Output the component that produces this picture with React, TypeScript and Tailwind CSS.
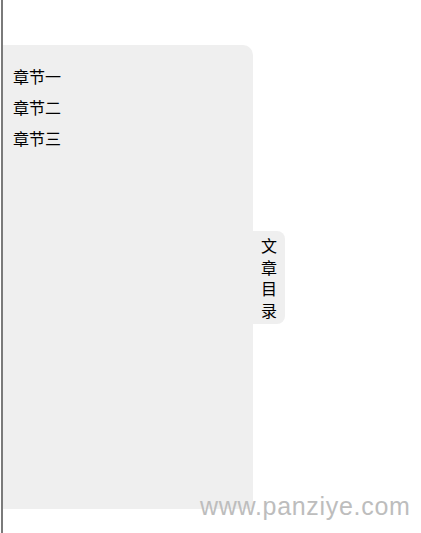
const chapters = ['章节一', '章节二', '章节三'];

export default function App() {
  return (
    <div className="relative w-[421px] h-[533px] bg-white overflow-hidden font-['Noto_Sans_CJK_SC',sans-serif]">
      <div className="flex h-full">
        <div className="w-[1px] shrink-0" />
        <div className="w-[2px] shrink-0 bg-[#7a7a7a]" />
        <div className="flex items-start pt-[45px]">
          <aside className="w-[250px] h-[464px] bg-[#efefef] rounded-tr-[10px] pt-[19px] pl-[10px]">
            <ul className="flex flex-col gap-[7px] text-[16px] leading-[24px] text-black">
              {chapters.map((c) => (
                <li key={c}>{c}</li>
              ))}
            </ul>
          </aside>
          <div className="mt-[186px] w-[32px] h-[93px] bg-[#efefef] rounded-r-[8px] flex flex-col items-center pt-[4px] text-[16px] leading-[21.7px] text-black">
            {'文章目录'.split('').map((ch, i) => (
              <span key={i}>{ch}</span>
            ))}
          </div>
        </div>
      </div>
      <div className="absolute left-[200px] top-[490px] text-[25px] leading-[32px] text-[#bdbdbd] font-['Liberation_Sans',sans-serif] tracking-[0.7px]">
        www.panziye.com
      </div>
    </div>
  );
}
